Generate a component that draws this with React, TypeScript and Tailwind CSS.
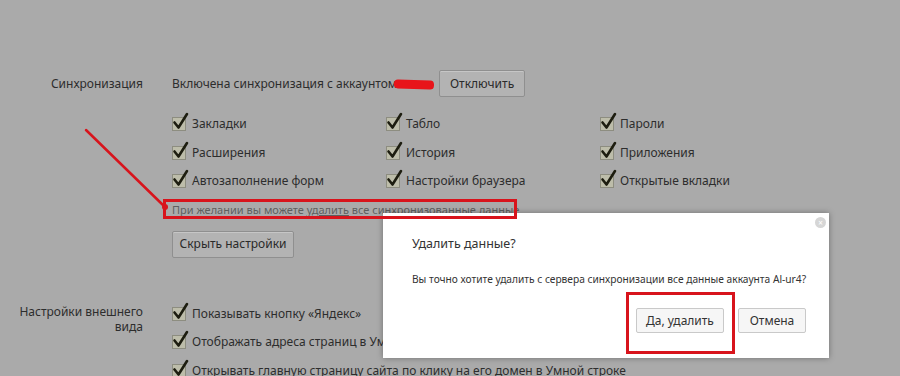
import React from 'react';

function Check() {
  return (
    <span className="relative inline-block w-[14px] h-[14px] shrink-0 border border-[#8d8d80] bg-[#bdbdaa]">
      <svg className="absolute -left-[1px] -top-[6px]" width="17" height="19" viewBox="0 0 17 19">
        <path d="M2.5 10.5 L6.5 15.5 L15 2" fill="none" stroke="#1d1d10" strokeWidth="2.6" strokeLinecap="round" strokeLinejoin="round" />
      </svg>
    </span>
  );
}

function Item({ label }: { label: string }) {
  return (
    <div className="flex items-center gap-[6px] h-[28.5px] whitespace-nowrap">
      <Check />
      <span className="text-[12px] text-[#2d2d2d]">{label}</span>
    </div>
  );
}

function GrayButton({ children, className = '' }: { children: React.ReactNode; className?: string }) {
  return (
    <button className={`h-[27px] border border-[#8f8f8f] bg-[#b3b3b3] text-[12px] text-[#2a2a2a] whitespace-nowrap rounded-[2px] shadow-[inset_0_1px_0_rgba(255,255,255,0.25)] ${className}`}>
      {children}
    </button>
  );
}

export default function App() {
  const syncItems = [
    ['Закладки', 'Табло', 'Пароли'],
    ['Расширения', 'История', 'Приложения'],
    ['Автозаполнение форм', 'Настройки браузера', 'Открытые вкладки'],
  ];

  return (
    <div className="relative w-[900px] h-[376px] overflow-hidden bg-[#aaaaaa] font-['Noto_Sans',sans-serif]">
      <div className="pt-[70px] grid grid-cols-[143px_1fr] gap-x-[29px]">
        {/* Синхронизация */}
        <div className="text-right text-[12px] text-[#2d2d2d] pt-[5px]">Синхронизация</div>
        <div>
          <div className="flex items-center h-[27px]">
            <span className="text-[12px] text-[#2d2d2d] whitespace-nowrap">Включена синхронизация с аккаунтом</span>
            <span className="relative w-[40px] h-[12px]">
              <span className="absolute -left-[3px] top-[2px] w-[40px] h-[9px] bg-[#e8141a] rounded-[4px] rotate-2" />
            </span>
            <GrayButton className="ml-[2px] w-[86px]">Отключить</GrayButton>
          </div>
          <div className="mt-[13px] grid grid-cols-[214px_214px_214px]">
            {syncItems.flat().map((label) => (
              <Item key={label} label={label} />
            ))}
          </div>
          <div className="mt-[6px] text-[11px] text-[#5e5e5e] h-[16px] leading-[16px] whitespace-nowrap">
            При желании вы можете <span className="underline">удалить</span> все синхронизованные данные
          </div>
          <GrayButton className="mt-[13px] w-[122px]">Скрыть настройки</GrayButton>
        </div>

        {/* Настройки внешнего вида */}
        <div className="mt-[46px] text-right text-[12px] leading-[15px] text-[#2d2d2d]">
          Настройки внешнего
          <br />
          вида
        </div>
        <div className="mt-[42px]">
          <Item label="Показывать кнопку «Яндекс»" />
          <Item label="Отображать адреса страниц в Умной строке" />
          <Item label="Открывать главную страницу сайта по клику на его домен в Умной строке" />
        </div>
      </div>

      {/* Диалог */}
      <div className="absolute left-[383px] top-[213px] w-[446px] h-[145px] bg-white shadow-[0_0_6px_rgba(0,0,0,0.35)] px-[29px] pt-[22px]">
        <span className="absolute right-[3px] top-[4px] w-[11px] h-[11px] rounded-full bg-[#d6d6d6] flex items-center justify-center text-[8px] leading-none text-white">×</span>
        <div className="text-[12.5px] text-[#333]">Удалить данные?</div>
        <div className="mt-[18px] text-[10.2px] text-[#333] whitespace-nowrap">
          Вы точно хотите удалить с сервера синхронизации все данные аккаунта Al-ur4?
        </div>
        <div className="mt-[21px] flex justify-end gap-[14px] -mr-[6px]">
          <button className="w-[88px] h-[25px] border border-[#c9c9c9] bg-[#f6f6f6] rounded-[2px] text-[12px] text-[#333]">Да, удалить</button>
          <button className="w-[68px] h-[25px] border border-[#c9c9c9] bg-[#f6f6f6] rounded-[2px] text-[12px] text-[#333]">Отмена</button>
        </div>
      </div>

      {/* Красные пометки */}
      <div className="absolute left-[163px] top-[199px] w-[354px] h-[20px] border-[3px] border-[#d8141c]" />
      <div className="absolute left-[626px] top-[292px] w-[109px] h-[62px] border-[3px] border-[#d8141c]" />
      <svg className="absolute left-0 top-0" width="900" height="376">
        <line x1="86" y1="130" x2="165" y2="207" stroke="#d8141c" strokeWidth="2.5" strokeLinecap="round" />
        <circle cx="165" cy="207" r="3" fill="#d8141c" />
      </svg>
    </div>
  );
}
